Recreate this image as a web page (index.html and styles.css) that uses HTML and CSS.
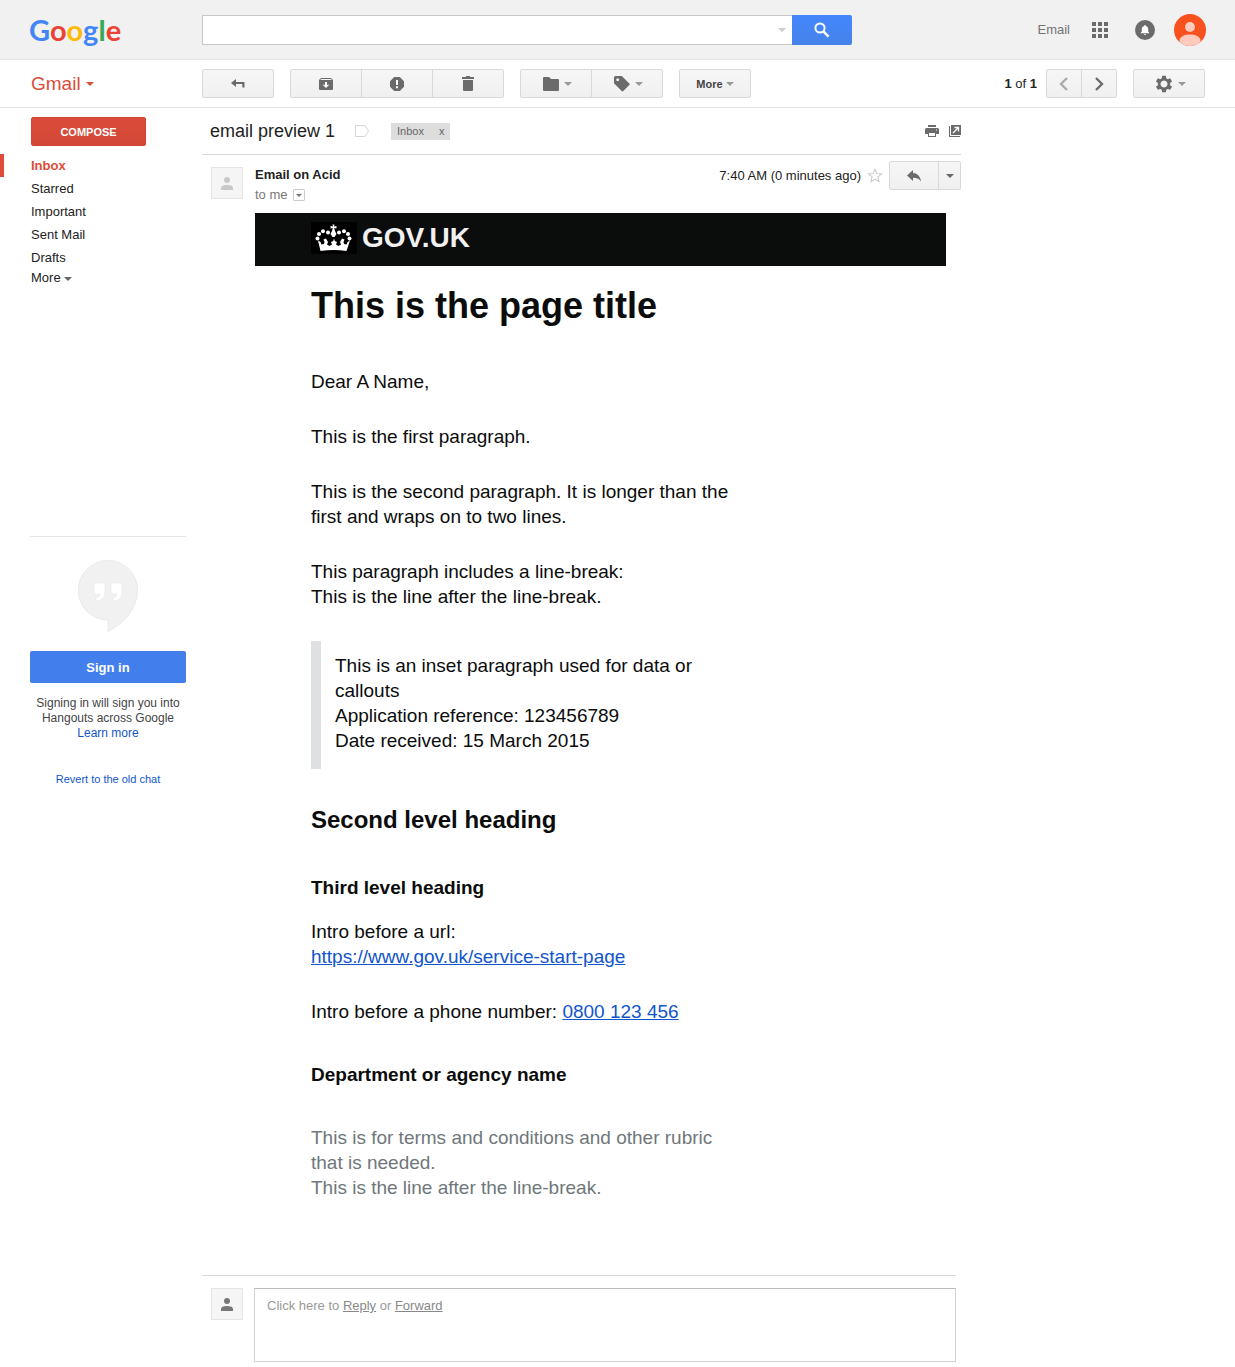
FILE: index.html
```html
<!DOCTYPE html>
<html lang="en">
<head>
<meta charset="utf-8">
<meta name="viewport" content="width=device-width, initial-scale=1">
<title>email preview 1 - Gmail</title>
<link rel="stylesheet" href="styles.css">
</head>
<body>
<header class="topbar">
  <a class="logo" href="#" aria-label="Google"><span class="blue">G</span><span class="red">o</span><span class="yellow">o</span><span class="blue">g</span><span class="green">l</span><span class="red">e</span></a>
  <form class="search">
    <div class="search-field">
      <input type="text" aria-label="Search mail">
      <span class="caret caret-light"></span>
    </div>
    <button type="button" class="search-button" aria-label="Search">
      <svg width="16" height="16" viewBox="0 0 16 16"><circle cx="6" cy="6" r="4.6" fill="none" stroke="#fff" stroke-width="2"/><path d="M9.4 9.4L14.6 14.6" stroke="#fff" stroke-width="2.6"/></svg>
    </button>
  </form>
  <nav class="account">
    <a href="#" class="account-name">Email</a>
    <button type="button" class="plain" aria-label="Apps">
      <svg width="16" height="16" viewBox="0 0 16 16" fill="#6b6b6b"><path d="M0 0h4v4H0zM6 0h4v4H6zM12 0h4v4h-4zM0 6h4v4H0zM6 6h4v4H6zM12 6h4v4h-4zM0 12h4v4H0zM6 12h4v4H6zM12 12h4v4h-4z"/></svg>
    </button>
    <button type="button" class="plain bell" aria-label="Notifications">
      <svg width="20" height="20" viewBox="0 0 20 20"><circle cx="10" cy="10" r="10" fill="#6b6b6b"/><path d="M10 5c.6 0 .9.4.9.9 1.600.4 2.300 1.700 2.300 3.200v2.400l1 1.200v.6H5.800v-.6l1-1.200V9.100c0-1.500.7-2.800 2.300-3.200 0-.5.3-.9.9-.9zM9 14h2v.8H9z" fill="#fff"/></svg>
    </button>
    <button type="button" class="plain" aria-label="Account">
      <svg width="32" height="32" viewBox="0 0 32 32"><circle cx="16" cy="16" r="16" fill="#f9511d"/><circle cx="16" cy="13" r="5" fill="#fdcabb"/><path d="M5.500 28V26C6 22.500 10.500 20.500 16 20.500S26 22.500 26.500 26v2A16 16 0 0 1 5.500 28z" fill="#fdcabb"/></svg>
    </button>
  </nav>
</header>

<div class="toolbar">
  <button type="button" class="product">Gmail <span class="caret caret-red"></span></button>
  <div class="actions">
    <div class="group">
      <button type="button" aria-label="Back to Inbox"><svg width="16" height="12" viewBox="0 0 16 12"><path d="M6 1v3h8.500v5.500H12.300V6H6v3L1 5z" fill="#6b6b6b"/></svg></button>
    </div>
    <div class="group">
      <button type="button" aria-label="Archive"><svg width="14" height="12" viewBox="0 0 14 12"><path d="M2 0h10l2 2v9q0 1-1 1H1q-1 0-1-1V2z" fill="#6b6b6b"/><path d="M2 1h10l.7 1H1.300z" fill="#f3f3f3"/><path d="M6 4h2v2.800h2.300L7 10 3.700 6.800H6z" fill="#fff"/></svg></button>
      <button type="button" aria-label="Report spam"><svg width="14" height="14" viewBox="0 0 14 14"><path d="M4.200 0h5.600L14 4.200v5.600L9.800 14H4.200L0 9.800V4.200z" fill="#6b6b6b"/><path d="M6 3h2v5H6zM6 9.200h2v2H6z" fill="#fff"/></svg></button>
      <button type="button" aria-label="Delete"><svg width="12" height="15" viewBox="0 0 12 15"><path d="M0 1h3.500l1-1h3l1 1H12v2H0zM1 4h10v10q0 1-1 1H2q-1 0-1-1z" fill="#6b6b6b"/></svg></button>
    </div>
    <div class="group group-menus">
      <button type="button" aria-label="Move to"><svg width="16" height="14" viewBox="0 0 16 14"><path d="M1 0h5l2 2h7q1 0 1 1v10q0 1-1 1H1q-1 0-1-1V1q0-1 1-1z" fill="#6b6b6b"/></svg><span class="caret"></span></button>
      <button type="button" aria-label="Labels"><svg width="16" height="16" viewBox="0 0 16 16"><path fill-rule="evenodd" d="M1.500 0h5.800q.6 0 1 .4l7 7q.8.8 0 1.600l-6 6q-.8.8-1.600 0l-7-7Q0 7.600 0 7V1.500Q0 0 1.500 0zM3.700 2.200a1.500 1.500 0 1 0 .01 0z" fill="#6b6b6b"/></svg><span class="caret"></span></button>
    </div>
    <div class="group">
      <button type="button">More<span class="caret caret-near"></span></button>
    </div>
  </div>
  <div class="paging">
    <span class="count"><b>1</b> of <b>1</b></span>
    <div class="group group-small">
      <button type="button" aria-label="Newer"><svg width="10" height="14" viewBox="0 0 10 14"><path d="M8 1L2 7l6 6" fill="none" stroke="#aaa" stroke-width="2.400"/></svg></button>
      <button type="button" aria-label="Older"><svg width="10" height="14" viewBox="0 0 10 14"><path d="M2 1l6 6-6 6" fill="none" stroke="#6b6b6b" stroke-width="2.400"/></svg></button>
    </div>
    <div class="group group-menus">
      <button type="button" aria-label="Settings"><svg width="18" height="18" viewBox="0 0 24 24"><path fill-rule="evenodd" d="M9.500 1h5l.5 3.300 2 1.200 3.200-1.300 2.500 4.300-2.600 2v3l2.600 2-2.500 4.300-3.200-1.300-2 1.200-.5 3.300h-5L9 19.700l-2-1.200-3.200 1.300-2.500-4.300 2.600-2v-3l-2.600-2 2.500-4.300L7 5.500l2-1.200zM12 7.300a4.700 4.700 0 1 0 .01 0z" fill="#6b6b6b"/></svg><span class="caret"></span></button>
    </div>
  </div>
</div>

<div class="layout">
  <aside class="sidebar">
    <button type="button" class="compose">COMPOSE</button>
    <nav class="folders">
      <a href="#" class="active">Inbox</a>
      <a href="#">Starred</a>
      <a href="#">Important</a>
      <a href="#">Sent Mail</a>
      <a href="#">Drafts</a>
      <a href="#" class="more">More <span class="caret caret-dark"></span></a>
    </nav>
    <section class="hangouts">
      <svg width="60" height="72" viewBox="0 0 60 72"><path d="M30 .5a29.500 29.500 0 1 0 0 59.500v11.500C45 64 59.500 49 59.500 30A29.500 29.500 0 0 0 30 .5z" fill="#f1f1f1" stroke="#e9e9e9"/><path d="M18 23h7q2 0 2 2v8q0 7-9 8v-3q4-1 4-4h-4q-2 0-2-2v-7q0-2 2-2zM35 23h7q2 0 2 2v8q0 7-9 8v-3q4-1 4-4h-4q-2 0-2-2v-7q0-2 2-2z" fill="#fff" stroke="#e9e9e9" stroke-width=".6"/></svg>
      <button type="button" class="signin">Sign in</button>
      <p>Signing in will sign you into Hangouts across Google <a href="#">Learn more</a></p>
      <a href="#" class="revert">Revert to the old chat</a>
    </section>
  </aside>

  <main class="thread">
    <div class="subject">
      <h1>email preview 1</h1>
      <svg class="marker" width="15" height="12" viewBox="0 0 15 12"><path d="M.5.5h9.500L13.500 6 10 11.500H.5z" fill="none" stroke="#d6d6d6"/></svg>
      <span class="label">Inbox <button type="button" aria-label="Remove Inbox label">x</button></span>
      <div class="subject-tools">
        <button type="button" class="plain" aria-label="Print"><svg width="14" height="12" viewBox="0 0 14 12"><path fill-rule="evenodd" d="M3 0h8v2H3zM1.500 3h11Q14 3 14 4.500V9h-3V7H3v2H0V4.500Q0 3 1.500 3zM11 4.500v1h1v-1zM3 7h8v5H3zM4 8v3h6V8z" fill="#6b6b6b"/></svg></button>
        <button type="button" class="plain" aria-label="Open in new window"><svg width="12" height="12" viewBox="0 0 12 12"><path d="M0 1h1v10h10v1H0z" fill="#6b6b6b"/><path d="M2 0h10v10H2z" fill="#6b6b6b"/><path d="M4 8l5-5M5.500 2.500h4v4" fill="none" stroke="#fff" stroke-width="1.300"/></svg></button>
      </div>
    </div>

    <article class="message">
      <span class="avatar"><svg width="12" height="13" viewBox="0 0 12 13"><circle cx="6" cy="3" r="3" fill="#c8c8c8"/><path d="M0 13v-2q0-3 6-3t6 3v2z" fill="#c8c8c8"/></svg></span>
      <div class="message-main">
        <div class="message-head">
          <div class="people">
            <div class="sender">Email on Acid</div>
            <div class="recipient">to me <button type="button" class="details" aria-label="Show details"><span class="caret caret-small"></span></button></div>
          </div>
          <div class="meta">
            <span>7:40 AM (0 minutes ago)</span>
            <button type="button" class="plain star" aria-label="Star"><svg width="16" height="15" viewBox="0 0 16 15"><path d="M8 1.300l1.800 4.200 4.700.4-3.600 3 1.200 4.800L8 11.200l-4.100 2.500 1.200-4.800-3.600-3 4.700-.4z" fill="none" stroke="#ccc" stroke-width="1.100"/></svg></button>
            <div class="group reply-group">
              <button type="button" aria-label="Reply"><svg width="14" height="12" viewBox="0 0 14 12"><path d="M6 0v3c5 .3 7.500 4 8 8.500C12 8.500 9.500 7.800 6 7.800V11L0 5.500z" fill="#6b6b6b"/></svg></button>
              <button type="button" class="reply-more" aria-label="More reply options"><span class="caret caret-dark"></span></button>
            </div>
          </div>
        </div>

        <div class="banner">
          <svg width="46" height="32" viewBox="0 0 46 32"><path d="M0 0h46v32H0z" fill="#000"/><g fill="#fff"><circle cx="6.500" cy="16.500" r="2"/><circle cx="8" cy="12" r="2"/><circle cx="12" cy="9.300" r="2"/><circle cx="17" cy="10.500" r="2"/><circle cx="28" cy="10.500" r="2"/><circle cx="33" cy="9.300" r="2"/><circle cx="37" cy="12" r="2"/><circle cx="38.500" cy="16.500" r="2"/><path d="M21.500 2.500h2l-.5 2 2.500-.5v2.500L23.200 6l.8 3 1.500 3-2 3h-2l-2-3L21 9l.8-3-2.300.5V4l2.500.5z"/><path d="M7 18.500l2.500 1.500 1 2.500 2.500-.5.500-2-1-2.500 2.500-1 2 3.500-1 2.500 2.500 1.500 2.500-1.500-1-2.500 2.200-1 .8-2.500.8 2.500 2.200 1-1 2.500 2.500 1.500 2.500-1.500-1-2.500 2-3.500 2.500 1-1 2.500.5 2 2.500.5 1-2.500 2.500-1.500L35.500 29q-13-2-26 0z"/></g></svg>
          <span>GOV.UK</span>
        </div>

        <div class="letter">
          <h2>This is the page title</h2>
          <p>Dear A Name,</p>
          <p>This is the first paragraph.</p>
          <p>This is the second paragraph. It is longer than the first and wraps on to two lines.</p>
          <p>This paragraph includes a line-break:<br>This is the line after the line-break.</p>
          <blockquote>This is an inset paragraph used for data or callouts<br>Application reference: 123456789<br>Date received: 15 March 2015</blockquote>
          <h3>Second level heading</h3>
          <h4>Third level heading</h4>
          <p>Intro before a url:<br><a href="#">https://www.gov.uk/service-start-page</a></p>
          <p>Intro before a phone number: <a href="#">0800 123 456</a></p>
          <h4 class="department">Department or agency name</h4>
          <p class="rubric">This is for terms and conditions and other rubric that is needed.<br>This is the line after the line-break.</p>
        </div>
      </div>
    </article>

    <div class="quick-reply">
      <span class="avatar"><svg width="12" height="13" viewBox="0 0 12 13"><circle cx="6" cy="3" r="3" fill="#777"/><path d="M0 13v-2q0-3 6-3t6 3v2z" fill="#777"/></svg></span>
      <div class="reply-box">Click here to <a href="#">Reply</a> or <a href="#">Forward</a></div>
    </div>
  </main>
</div>
</body>
</html>
```

FILE: styles.css
```css
* { box-sizing: border-box; }

body {
  margin: 0;
  background: #fff;
  color: #222;
  font: 13px/16px "Liberation Sans", Arial, Helvetica, sans-serif;
}

h1, h2, h3, h4, p, blockquote { margin: 0; }
button { font: inherit; color: inherit; cursor: pointer; }
a { text-decoration: none; }
svg { display: block; flex: none; }

.plain { display: block; padding: 0; border: 0; background: none; }

.caret {
  display: inline-block;
  flex: none;
  border: 4px solid transparent;
  border-top-color: #999;
  border-bottom: 0;
  vertical-align: middle;
}
.caret-light { border-top-color: #ccc; }
.caret-red { border-top-color: #dd4b39; }
.caret-dark { border-top-color: #666; }
.caret-small { border-width: 3px; border-bottom: 0; border-top-color: #777; }

/* Top bar */
.topbar {
  display: flex;
  align-items: center;
  height: 60px;
  padding: 0 29px;
  border-bottom: 1px solid #e5e5e5;
  background: #f1f1f1;
}
.logo {
  width: 173px;
  font: bold 29px/40px Lato, sans-serif;
}
.blue { color: #4285f4; }
.red { color: #ea4335; }
.yellow { color: #fbbc05; }
.green { color: #34a853; }

.search { display: flex; flex: 0 1 650px; height: 30px; }
.search-field {
  display: flex;
  flex: 1;
  align-items: center;
  padding-right: 6px;
  border: 1px solid #c8c8c8;
  border-right: 0;
  background: #fff;
}
.search-field input {
  flex: 1;
  min-width: 0;
  padding: 0 8px;
  border: 0;
  outline: 0;
  background: none;
  font: 16px/24px "Liberation Sans", Arial, sans-serif;
}
.search-button {
  display: flex;
  align-items: center;
  justify-content: center;
  width: 60px;
  padding: 0;
  border: 0;
  border-radius: 0 2px 2px 0;
  background: linear-gradient(#4387fd, #4683ea);
}

.account { display: flex; align-items: center; margin-left: auto; }
.account-name { margin-right: 22px; color: #737373; }
.bell { margin: 0 19px 0 27px; }

/* Toolbar */
.toolbar {
  display: flex;
  align-items: center;
  height: 48px;
  padding: 0 30px;
  border-bottom: 1px solid #e5e5e5;
}
.product {
  width: 172px;
  padding: 0 0 0 1px;
  border: 0;
  background: none;
  color: #dd4b39;
  font-size: 19px;
  line-height: 24px;
  text-align: left;
}
.actions { display: flex; gap: 16px; }
.group { display: flex; }
.group button {
  display: flex;
  align-items: center;
  justify-content: center;
  gap: 5px;
  width: 72px;
  height: 29px;
  padding: 0;
  border: 1px solid #d9d9d9;
  background: linear-gradient(#f6f6f6, #f0f0f0);
  color: #444;
  font-size: 11px;
  font-weight: bold;
}
.group button + button { margin-left: -1px; }
.group button:first-child { border-radius: 2px 0 0 2px; }
.group button:last-child { border-radius: 0 2px 2px 0; }
.group button:only-child { border-radius: 2px; }
.group .caret-near { margin-left: -2px; }
.group-menus button { padding-left: 3px; }
.group-small button { width: 36px; }

.paging { display: flex; align-items: center; margin-left: auto; }
.count { margin-right: 9px; }
.count b { font-weight: bold; }
.group-small { margin-right: 16px; }

/* Columns */
.layout { display: flex; align-items: flex-start; }
.sidebar { flex: none; width: 202px; padding-top: 9px; }
.thread { flex: 0 1 759px; min-width: 0; }

.compose {
  display: block;
  width: 115px;
  height: 29px;
  margin: 0 0 8px 31px;
  padding: 0;
  border: 1px solid #d04636;
  border-radius: 2px;
  background: linear-gradient(#dd4b39, #d14836);
  color: #fff;
  font-size: 11px;
  font-weight: bold;
}
.folders { min-height: 382px; }
.folders a {
  display: block;
  padding-left: 27px;
  border-left: 4px solid transparent;
  color: #222;
  line-height: 23px;
}
.folders .active { border-color: #dd4b39; color: #dd4b39; font-weight: bold; }
.folders .more { line-height: 18px; }

.hangouts {
  display: flex;
  flex-direction: column;
  align-items: center;
  width: 156px;
  margin-left: 30px;
  padding-top: 23px;
  border-top: 1px solid #e5e5e5;
  color: #444;
  font-size: 12px;
  line-height: 15px;
  text-align: center;
}
.hangouts a { color: #15c; }
.signin {
  width: 100%;
  height: 32px;
  margin: 19px 0 13px;
  padding: 0;
  border: 0;
  border-radius: 2px;
  background: #427fed;
  color: #fff;
  font-size: 13px;
  font-weight: bold;
}
.hangouts p a { display: block; }
.hangouts .revert { margin-top: 31px; font-size: 11px; }

/* Subject */
.subject {
  display: flex;
  align-items: center;
  height: 47px;
  padding: 0 0 0 8px;
  border-bottom: 1px solid #d8d8d8;
}
.subject h1 { font-size: 18px; font-weight: normal; line-height: 24px; }
.marker { margin: 0 21px 0 20px; }
.label {
  display: flex;
  gap: 15px;
  padding: 0 6px;
  background: #ddd;
  color: #666;
  font-size: 11px;
  line-height: 17px;
}
.label button { padding: 0; border: 0; background: none; }
.subject-tools { display: flex; gap: 10px; margin-left: auto; }

/* Message */
.message { display: flex; padding: 6px 0 75px 9px; }
.avatar {
  display: flex;
  flex: none;
  align-items: center;
  justify-content: center;
  width: 32px;
  height: 32px;
  margin-right: 12px;
  border: 1px solid #e5e5e5;
  background: #f5f5f5;
}
.message > .avatar { margin-top: 6px; }
.message-main { flex: 1; min-width: 0; }
.message-head { display: flex; justify-content: space-between; height: 52px; }
.people { padding-top: 6px; }
.sender { font-weight: bold; }
.recipient { display: flex; align-items: center; gap: 5px; margin-top: 4px; color: #777; }
.details {
  display: flex;
  align-items: center;
  justify-content: center;
  width: 12px;
  height: 12px;
  padding: 0;
  border: 1px solid #ccc;
  border-radius: 1px;
  background: #fff;
}
.meta { display: flex; align-items: center; height: 29px; }
.star { margin: 0 6px; }
.reply-group button { width: 50px; }
.reply-group .reply-more { width: 23px; }

.banner {
  display: flex;
  align-items: center;
  gap: 5px;
  height: 53px;
  margin-right: 15px;
  padding: 0 0 4px 56px;
  background: #0b0c0c;
  color: #f1f1f1;
  font-size: 28px;
  font-weight: bold;
  line-height: 32px;
}

.letter {
  max-width: 486px;
  padding: 20px 0 0 56px;
  color: #0b0c0c;
  font-size: 19px;
  line-height: 25px;
}
.letter p { margin-bottom: 30px; }
.letter h2 { margin-bottom: 43px; font-size: 36px; line-height: 40px; }
.letter blockquote {
  margin: 32px 0 36px;
  padding: 12px 0 16px 14px;
  border-left: 10px solid #dee0e2;
}
.letter h3 { margin-bottom: 40px; font-size: 24px; line-height: 30px; }
.letter h4 { margin-bottom: 19px; font-size: 19px; }
.letter .department { margin: 38px 0; }
.letter a { color: #15c; text-decoration: underline; }
.letter .rubric { margin: 0; color: #6f777b; }

/* Quick reply */
.quick-reply {
  display: flex;
  margin: 0 5px 5px 0;
  padding: 12px 0 0 9px;
  border-top: 1px solid #d8d8d8;
}
.quick-reply .avatar { margin-right: 11px; }
.reply-box {
  flex: 1;
  height: 74px;
  padding: 9px 12px;
  border: 1px solid #d2d2d2;
  border-top-color: #bbb;
  color: #999;
}
.reply-box a { color: #888; text-decoration: underline; }
```
